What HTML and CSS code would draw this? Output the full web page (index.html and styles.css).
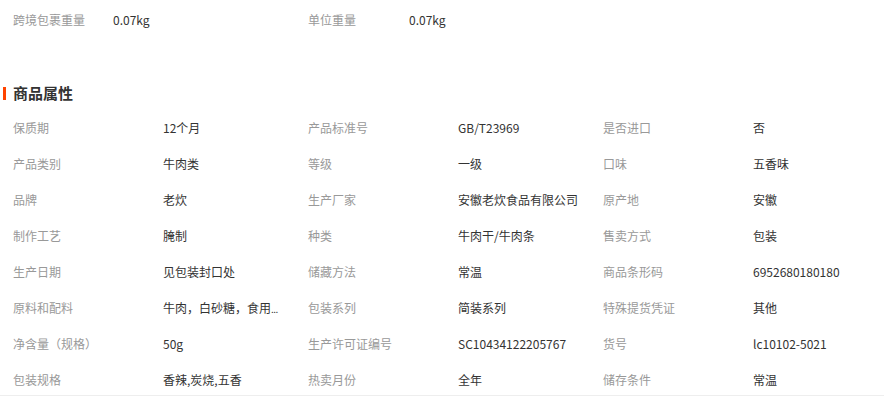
FILE: index.html
```html
<!DOCTYPE html>
<html lang="zh">
<head>
<meta charset="utf-8">
<link rel="stylesheet" href="styles.css">
</head>
<body>
<div class="page">
  <div class="top-row">
    <span class="label">跨境包裹重量</span><span class="value">0.07kg</span>
    <span class="label">单位重量</span><span class="value">0.07kg</span>
  </div>
  <h2 class="section-title">商品属性</h2>
  <div class="attr-grid">
    <span class="label">保质期</span><span class="value">12个月</span>
    <span class="label">产品标准号</span><span class="value">GB/T23969</span>
    <span class="label">是否进口</span><span class="value">否</span>

    <span class="label">产品类别</span><span class="value">牛肉类</span>
    <span class="label">等级</span><span class="value">一级</span>
    <span class="label">口味</span><span class="value">五香味</span>

    <span class="label">品牌</span><span class="value">老炊</span>
    <span class="label">生产厂家</span><span class="value">安徽老炊食品有限公司</span>
    <span class="label">原产地</span><span class="value">安徽</span>

    <span class="label">制作工艺</span><span class="value">腌制</span>
    <span class="label">种类</span><span class="value">牛肉干/牛肉条</span>
    <span class="label">售卖方式</span><span class="value">包装</span>

    <span class="label">生产日期</span><span class="value">见包装封口处</span>
    <span class="label">储藏方法</span><span class="value">常温</span>
    <span class="label">商品条形码</span><span class="value">6952680180180</span>

    <span class="label">原料和配料</span><span class="value">牛肉，白砂糖，食用<span class="dots">...</span></span>
    <span class="label">包装系列</span><span class="value">简装系列</span>
    <span class="label">特殊提货凭证</span><span class="value">其他</span>

    <span class="label">净含量（规格）</span><span class="value">50g</span>
    <span class="label">生产许可证编号</span><span class="value">SC10434122205767</span>
    <span class="label">货号</span><span class="value">lc10102-5021</span>

    <span class="label">包装规格</span><span class="value">香辣,炭烧,五香</span>
    <span class="label">热卖月份</span><span class="value">全年</span>
    <span class="label">储存条件</span><span class="value">常温</span>
  </div>
</div>
</body>
</html>
```

FILE: styles.css
```css
html, body {
  margin: 0;
  padding: 0;
  background: #fff;
}

body {
  font-family: "Microsoft YaHei", "Noto Sans CJK SC", "Noto Sans", sans-serif;
  font-size: 12px;
  color: #333;
  overflow: hidden;
}

.page {
  width: 884px;
}

.label {
  color: #999;
  white-space: nowrap;
}

.value {
  color: #333;
  white-space: nowrap;
}

.dots {
  font-size: 10px;
  letter-spacing: -0.5px;
}

.top-row {
  display: grid;
  grid-template-columns: 100px 195px 101px 1fr;
  padding-left: 13px;
  height: 40px;
  line-height: 40px;
}

.section-title {
  display: flex;
  align-items: center;
  gap: 7px;
  margin: 43px 0 0 3px;
  height: 20px;
  line-height: 20px;
  font-size: 15px;
  font-weight: bold;
  color: #333;
}

.section-title::before {
  content: "";
  width: 3px;
  height: 13px;
  background: #ff4400;
}

.attr-grid {
  display: grid;
  grid-template-columns: 150px 145px 150px 145px 150px 1fr;
  grid-template-rows: repeat(7, 36px) 33px;
  margin-top: 7px;
  padding-left: 13px;
  line-height: 36px;
  border-bottom: 1px solid #eeeeee;
}
```
